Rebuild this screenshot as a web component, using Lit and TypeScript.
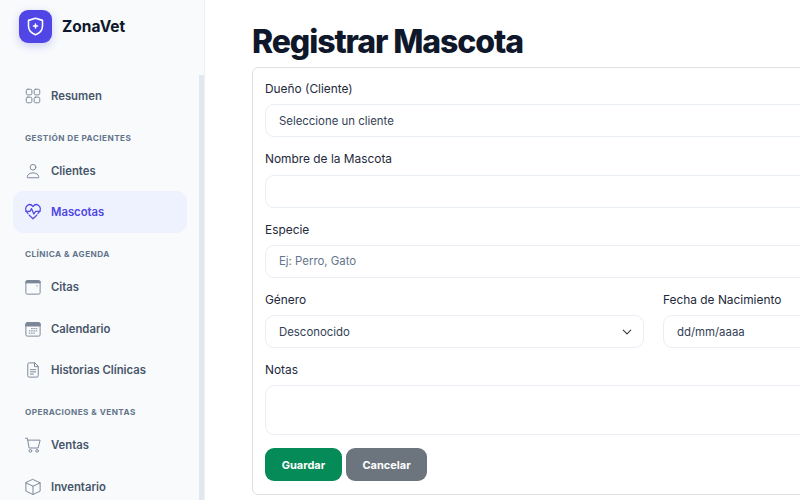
import {LitElement, css, html, svg} from 'lit';
import {customElement} from 'lit/decorators.js';

const icons = {
  grid: svg`<rect x="3" y="3" width="7.500" height="7.500" rx="2"/><rect x="13.500" y="3" width="7.500" height="7.500" rx="2"/><rect x="3" y="13.500" width="7.500" height="7.500" rx="2"/><rect x="13.500" y="13.500" width="7.500" height="7.500" rx="2"/>`,
  user: svg`<circle cx="12" cy="7" r="3.800"/><path d="M4.500 20.500v-1C4.500 16.500 8 14.500 12 14.500s7.500 2 7.500 5v1z"/>`,
  heart: svg`<g transform="translate(0 -1.500) scale(1 1.050)"><path d="M5.500 15 3.800 13C1.500 10.500 1.700 6.500 4.500 4.500 7 2.800 10.200 3.400 12 6 13.800 3.400 17 2.800 19.500 4.500c2.800 2 3 6 .7 8.500l-1.700 2M7 17l5 4.500 5-4.500"/><path d="M2.500 12H8l2-3.500 3 7 2.500-3.500h6"/></g>`,
  cal: svg`<rect x="2.500" y="3.500" width="19" height="18" rx="1.800"/><path d="M2.500 5.500c0-1 .8-2 2-2h15c1.200 0 2 1 2 2V6.500h-19z" fill="currentColor"/><path d="M17 10.500h.5"/>`,
  calgrid: svg`<rect x="2.500" y="3.500" width="19" height="18" rx="1.800"/><path d="M2.500 5.500c0-1 .8-2 2-2h15c1.200 0 2 1 2 2V8h-19z" fill="currentColor"/><path d="M10 11.500h1M13 11.500h1M16 11.500h1M7 14.500h1M10 14.500h1M13 14.500h1M16 14.500h1M7 17.500h1M10 17.500h1M13 17.500h1"/>`,
  doc: svg`<path d="M14 2.500H7a2 2 0 0 0-2 2v15a2 2 0 0 0 2 2h10a2 2 0 0 0 2-2V7.500z"/><path d="M14 2.500v5h5M8.500 11.500h7M8.500 14.500h7M8.500 17.500h4"/>`,
  cart: svg`<path d="M2 3h2.500l2.300 13h12l2.700-10.500H5"/><circle cx="8.500" cy="19.800" r="1.800"/><circle cx="17.500" cy="19.800" r="1.800"/>`,
  box: svg`<path d="M12 2 21.500 6.500v11L12 22l-9.500-4.500v-11z"/><path d="m2.500 6.500 9.500 4.500 9.500-4.500M12 11v11"/>`,
};

const sections = [
  {items: [{icon: icons.grid, label: 'Resumen'}]},
  {
    title: 'Gestión de Pacientes',
    items: [
      {icon: icons.user, label: 'Clientes'},
      {icon: icons.heart, label: 'Mascotas', active: true},
    ],
  },
  {
    title: 'Clínica & Agenda',
    items: [
      {icon: icons.cal, label: 'Citas'},
      {icon: icons.calgrid, label: 'Calendario'},
      {icon: icons.doc, label: 'Historias Clínicas'},
    ],
  },
  {
    title: 'Operaciones & Ventas',
    items: [
      {icon: icons.cart, label: 'Ventas'},
      {icon: icons.box, label: 'Inventario'},
    ],
  },
];

@customElement('app-root')
export class AppRoot extends LitElement {
  static styles = css`
    :host {
      display: flex;
      width: 800px;
      height: 500px;
      overflow: hidden;
      position: relative;
      background: #fff;
      font-family: Inter, 'Liberation Sans', sans-serif;
      color: #0f172a;
    }
    .sidebar {
      flex: 0 0 205px;
      box-sizing: border-box;
      height: 500px;
      overflow: hidden;
      position: relative;
      background: #f8fafc;
      border-right: 1px solid #eef2f6;
    }
    .thumb {
      position: absolute;
      left: 199px;
      top: 75px;
      bottom: 0;
      width: 5px;
      background: #e2e8f0;
    }
    .brand {
      display: flex;
      align-items: center;
      gap: 10px;
      height: 33px;
      padding: 10px 0 0 19px;
      font-size: 15.500px;
      font-weight: 700;
    }
    .brand span:last-child {
      margin-top: -1px;
    }
    .logo {
      width: 33px;
      height: 33px;
      border-radius: 9px;
      background: #4f46e5;
      box-shadow: 0 3px 8px rgba(79, 70, 229, 0.25);
      display: flex;
      align-items: center;
      justify-content: center;
    }
    nav {
      padding: 32px 0 0 13px;
      width: 174px;
    }
    .group-title {
      box-sizing: border-box;
      height: 33px;
      padding: 15px 0 0 12px;
      font-size: 8.200px;
      line-height: 12px;
      font-weight: 700;
      letter-spacing: 0.45px;
      text-transform: uppercase;
      color: #64748b;
    }
    .item {
      display: flex;
      align-items: center;
      gap: 9px;
      height: 41.700px;
      padding-left: 11px;
      border-radius: 10px;
      font-size: 11.300px;
      font-weight: 600;
      color: #475569;
    }
    .item svg {
      width: 18px;
      height: 18px;
      flex: none;
      fill: none;
      stroke: #7b8798;
      stroke-width: 1.300;
      stroke-linecap: round;
      stroke-linejoin: round;
      color: #7b8798;
    }
    .item.active {
      background: #eef2ff;
      color: #4f46e5;
    }
    .item.active svg {
      stroke: #4f46e5;
      stroke-width: 1.600;
      color: #4f46e5;
    }
    main {
      flex: none;
      width: 803px;
      margin-left: 47px;
    }
    h1 {
      margin: 0;
      height: 67px;
      box-sizing: border-box;
      padding-top: 22px;
      font-size: 32px;
      line-height: 40px;
      font-weight: 800;
      letter-spacing: -1.100px;
      color: #0f172a;
    }
    form {
      box-sizing: border-box;
      height: 428px;
      padding: 12px 12px 0;
      border: 1px solid #dee2e6;
      border-radius: 6px;
      background: #fff;
    }
    .field {
      margin-bottom: 13.130px;
    }
    label {
      display: block;
      height: 24.200px;
      line-height: 18px;
      font-size: 11.900px;
      color: #1e293b;
    }
    select,
    input,
    textarea {
      display: block;
      box-sizing: border-box;
      width: 100%;
      height: 33px;
      margin: 0;
      padding: 0 13px;
      border: 1px solid #e9eef5;
      border-radius: 9px;
      background: #fff;
      font: 400 11.400px Inter, 'Liberation Sans', sans-serif;
      color: #334155;
      outline: none;
      appearance: none;
    }
    input::placeholder {
      color: #64748b;
    }
    textarea {
      height: 50px;
      margin-top: -0.5px;
      resize: none;
    }
    .row {
      display: grid;
      grid-template-columns: 379px 379px;
      column-gap: 19px;
    }
    .select-wrap {
      position: relative;
    }
    .select-wrap svg {
      position: absolute;
      right: 12px;
      top: 12px;
      width: 10px;
      height: 10px;
      fill: none;
      stroke: #343a40;
      stroke-width: 1.800;
      stroke-linecap: round;
      stroke-linejoin: round;
      pointer-events: none;
    }
    .actions {
      display: flex;
      gap: 4px;
    }
    button {
      height: 33px;
      padding: 0;
      border: none;
      border-radius: 9px;
      color: #fff;
      font: 700 11px Inter, 'Liberation Sans', sans-serif;
    }
    .save {
      width: 77px;
      background: #058b57;
    }
    .cancel {
      width: 81px;
      background: #6c757d;
    }
  `;

  render() {
    return html`
      <aside class="sidebar">
        <div class="brand">
          <span class="logo">
            <svg width="21" height="21" viewBox="0 0 24 24" fill="none" stroke="#fff" stroke-width="1.800" stroke-linecap="round" stroke-linejoin="round">
              <path d="M12 2.500 20 5v6.500c0 5-3.400 8.200-8 10-4.600-1.800-8-5-8-10V5z" />
              <path d="M12 9.200v4.600M9.700 11.500h4.600" />
            </svg>
          </span>
          <span>ZonaVet</span>
        </div>
        <nav>
          ${sections.map(
            (s) => html`
              ${s.title ? html`<div class="group-title">${s.title}</div>` : ''}
              ${s.items.map(
                (i) => html`
                  <div class="item ${i.active ? 'active' : ''}">
                    <svg viewBox="0 0 24 24">${i.icon}</svg>
                    <span>${i.label}</span>
                  </div>
                `,
              )}
            `,
          )}
        </nav>
        <div class="thumb"></div>
      </aside>
      <main>
        <h1>Registrar Mascota</h1>
        <form>
          <div class="field">
            <label>Dueño (Cliente)</label>
            <select><option>Seleccione un cliente</option></select>
          </div>
          <div class="field">
            <label>Nombre de la Mascota</label>
            <input type="text" />
          </div>
          <div class="field">
            <label>Especie</label>
            <input type="text" placeholder="Ej: Perro, Gato" />
          </div>
          <div class="row">
            <div class="field">
              <label>Género</label>
              <div class="select-wrap">
                <select><option>Desconocido</option></select>
                <svg viewBox="0 0 16 16"><path d="m2 5 6 6 6-6" /></svg>
              </div>
            </div>
            <div class="field">
              <label>Fecha de Nacimiento</label>
              <input type="text" value="dd/mm/aaaa" />
            </div>
          </div>
          <div class="field">
            <label>Notas</label>
            <textarea></textarea>
          </div>
          <div class="actions">
            <button type="button" class="save">Guardar</button>
            <button type="button" class="cancel">Cancelar</button>
          </div>
        </form>
      </main>
    `;
  }
}
